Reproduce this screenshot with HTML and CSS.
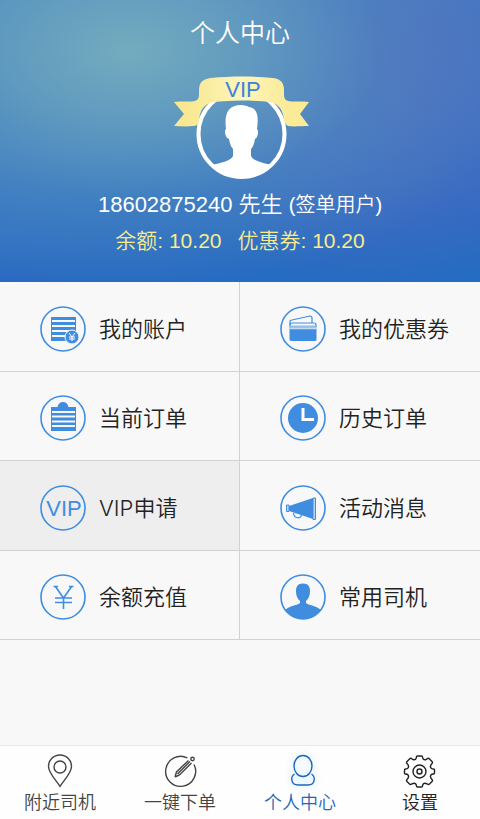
FILE: index.html
```html
<!DOCTYPE html>
<html lang="zh-CN">
<head>
<meta charset="utf-8">
<meta name="viewport" content="width=device-width, initial-scale=1">
<title>个人中心</title>
<link rel="stylesheet" href="styles.css">
</head>
<body>
<header class="hero">
  <h1 class="title">个人中心</h1>
  <svg class="avatar" width="136" height="104" viewBox="0 0 136 104" role="img" aria-label="VIP">
    <defs>
      <linearGradient id="ribbon" x1="0" x2="1" y1="0" y2="0">
        <stop offset="0" stop-color="#fbe78c"/>
        <stop offset=".2" stop-color="#f9eb9a"/>
        <stop offset=".5" stop-color="#fff5ba"/>
        <stop offset=".8" stop-color="#faec9c"/>
        <stop offset="1" stop-color="#fbea92"/>
      </linearGradient>
      <clipPath id="face"><circle cx="67.500" cy="58" r="44"/></clipPath>
    </defs>
    <circle class="ring" cx="67.500" cy="58" r="43"/>
    <path class="person" clip-path="url(#face)" d="M52 53C50 38 54 29 67 29C71 29 73 30 75 31C83 32 85 39 83 53C85 54 84 62 81 63C80 68 79 71 77 73V80C79 85 89 87 97 89V104H38V89C46 87 57 85 59 80V73C57 71 56 68 55 63C51 62 50 54 52 53Z"/>
    <path class="ribbon" d="M0 26C7 25 17 26 21 25C24 24 25 22 25 18V14C25 6 29 3 37 2C57 0 79 0 99 2C107 3 110 7 110 14V18C110 22 111 24 114 25C118 26 128 25 135 26L126 38L135 50C128 50 119 51 114 50C112 49 111 47 110 44C109 34 105 28 96 26C77 24 58 24 39 26C30 28 26 34 25 44C25 48 23 50 18 50C12 51 6 50 0 50L10 38Z"/>
    <text class="ribbon-text" x="69" y="21" text-anchor="middle">VIP</text>
  </svg>
  <p class="user">18602875240 先生 <span class="kind">(签单用户)</span></p>
  <p class="funds"><span>余额: 10.20</span><span>优惠券: 10.20</span></p>
</header>

<nav class="menu" aria-label="个人中心">
  <a class="item" href="#account">
    <svg class="badge" viewBox="0 0 46 46" aria-hidden="true">
      <circle class="line" cx="23" cy="23" r="22"/>
      <path class="fill" d="M11 11H36V35H11Z"/>
      <path class="bar" d="M12 15H35M12 20H35M12 25H35M12 30H26"/>
      <circle class="coin" cx="32" cy="31" r="7"/>
      <path class="mark" d="M29 27L32 31L35 27M32 31V35M29 31H35M29 33H35"/>
    </svg>
    <span>我的账户</span>
  </a>
  <a class="item" href="#coupons">
    <svg class="badge" viewBox="0 0 46 46" aria-hidden="true">
      <circle class="line" cx="23" cy="23" r="22"/>
      <path class="thin" d="M10 19V15Q10 14 12 14L30 10Q32 10 32 12V17"/>
      <path class="thin" d="M10 21V19Q10 17 12 17H34Q36 17 36 19V21Z"/>
      <path class="fill" d="M9.500 23H36.500V34Q36.500 35 35 35H11Q9.500 35 9.500 33Z"/>
      <path class="wallet" d="M9 20H37M9 23H37"/>
    </svg>
    <span>我的优惠券</span>
  </a>
  <a class="item" href="#orders">
    <svg class="badge" viewBox="0 0 46 46" aria-hidden="true">
      <circle class="line" cx="23" cy="23" r="22"/>
      <path class="fill" d="M11 12H17.500C18 9 20 7 23 7S28 9 28.500 12H36V36H11Z"/>
      <path class="bar" d="M12 17H35M12 21.500H35M12 26.500H35M12 31H35"/>
    </svg>
    <span>当前订单</span>
  </a>
  <a class="item" href="#history">
    <svg class="badge" viewBox="0 0 46 46" aria-hidden="true">
      <circle class="line" cx="23" cy="23" r="22"/>
      <circle class="fill" cx="23" cy="23" r="15"/>
      <path class="hands" d="M23 13V24.500H34"/>
    </svg>
    <span>历史订单</span>
  </a>
  <a class="item current" href="#vip">
    <svg class="badge" viewBox="0 0 46 46" aria-hidden="true">
      <circle class="line" cx="23" cy="23" r="22"/>
      <text class="badge-text" x="24" y="31" text-anchor="middle">VIP</text>
    </svg>
    <span>VIP申请</span>
  </a>
  <a class="item" href="#news">
    <svg class="badge" viewBox="0 0 46 46" aria-hidden="true">
      <circle class="line" cx="23" cy="23" r="22"/>
      <path class="fill" d="M9 21L33 13V34L9 26Z"/>
      <path class="horn" d="M33 13H35.500V34.500H33ZM6.500 20H9V26.500H6.500Z"/>
      <path class="thin" d="M13.500 28C14 34 21 34 21.500 30"/>
    </svg>
    <span>活动消息</span>
  </a>
  <a class="item" href="#topup">
    <svg class="badge" viewBox="0 0 46 46" aria-hidden="true">
      <circle class="line" cx="23" cy="23" r="22"/>
      <path class="yen" d="M15 12L23.500 24L32 12M23.500 24V35M15 24H32M15 28.500H32M13.500 12.500H18M29 12.500H33.500"/>
    </svg>
    <span>余额充值</span>
  </a>
  <a class="item" href="#drivers">
    <svg class="badge" viewBox="0 0 46 46" aria-hidden="true">
      <defs><clipPath id="driver"><circle cx="23" cy="23" r="22"/></clipPath></defs>
      <path class="fill" clip-path="url(#driver)" d="M23 9.500C28.500 9.500 30 13 30 17C30 22 28 25.500 26 27V29C28 31 37 32 41 36V46H5V36C9 32 18 31 20 29V27C18 25.500 16 22 16 17C16 13 17.500 9.500 23 9.500Z"/>
      <circle class="line" cx="23" cy="23" r="22"/>
    </svg>
    <span>常用司机</span>
  </a>
</nav>

<nav class="tabs" aria-label="主导航">
  <a class="tab" href="#nearby">
    <svg class="tab-icon" viewBox="0 0 34 34" aria-hidden="true">
      <path d="M17 32.500C13 26 5.500 19 5.500 12.500A11.500 11.500 0 0 1 28.500 12.500C28.500 19 21 26 17 32.500Z"/>
      <circle cx="17" cy="13" r="6"/>
    </svg>
    <span>附近司机</span>
  </a>
  <a class="tab" href="#order">
    <svg class="tab-icon" viewBox="0 0 34 34" aria-hidden="true">
      <path d="M24.500 4A15 15 0 1 0 31 10.500"/>
      <path d="M12 23L13.500 18L25.500 6.500M12 23L16.500 21L28.500 9M14.500 20L27 7.500"/>
      <circle cx="29.500" cy="5" r="1.700"/>
    </svg>
    <span>一键下单</span>
  </a>
  <a class="tab active" href="#me" aria-current="page">
    <svg class="tab-icon" viewBox="0 0 34 34" aria-hidden="true">
      <ellipse cx="20" cy="12" rx="9" ry="10.500"/>
      <path d="M11.500 20C7 23 8 31 15 31H25C32 31 33 23 28.500 20"/>
    </svg>
    <span>个人中心</span>
  </a>
  <a class="tab dark" href="#settings">
    <svg class="tab-icon" viewBox="0 0 34 34" aria-hidden="true">
      <path d="M13.500 3Q13.500 2 14.500 2H18.500Q19.500 2 19.500 3Q20 6.500 23 5.500L24.500 4.500Q25.500 4 26.500 5L29 7.500Q30 8.500 29 9.500Q26.500 12 28 14Q28.500 15 30.500 15Q31.500 15 31.500 16V19Q31.500 20 30.500 20Q28.500 20 28 21Q26.500 23 29 25.500Q30 26.500 29 27.500L26.500 30Q25.500 31 24.500 30L23 29.500Q20 28.500 19.500 32Q19.500 33 18.500 33H14.500Q13.500 33 13.500 32Q13 28.500 10 29.500L8.500 30Q7.500 31 6.500 30L4 27.500Q3 26.500 4 25.500Q6.500 23 5 21Q4.500 20 2.500 20Q1.500 20 1.500 19V16Q1.500 15 2.500 15Q4.500 15 5 14Q6.500 12 4 9.500Q3 8.500 4 7.500L6.500 5Q7.500 4 8.500 4.500L10 5.500Q13 6.500 13.500 3Z"/>
      <circle cx="16.500" cy="17.500" r="6.500"/>
      <circle cx="16.500" cy="17.500" r="2.500"/>
    </svg>
    <span>设置</span>
  </a>
</nav>
</body>
</html>
```
FILE: styles.css
```css
* {
  box-sizing: border-box;
}

body {
  margin: 0;
  min-height: 100vh;
  display: flex;
  flex-direction: column;
  background: #f8f8f8;
  color: #222;
  font-family: "Liberation Sans", "Noto Sans CJK SC", sans-serif;
  font-weight: 350;
}

a {
  color: inherit;
  text-decoration: none;
}

.hero {
  display: flex;
  flex-direction: column;
  align-items: center;
  padding: 15px 0 23px;
  color: #fff;
  background:
    radial-gradient(ellipse 85% 85% at 27% 18%, #74abbe 0%, rgba(104, 162, 191, 0.8) 30%, rgba(84, 148, 191, 0.4) 62%, rgba(70, 130, 191, 0) 100%),
    radial-gradient(ellipse 50% 90% at 82% 20%, #4e6bc0 0%, rgba(76, 107, 192, 0) 100%),
    linear-gradient(172deg, #4080c0 0%, #3c78c2 45%, #2a6bc2 80%, #206cc2 100%);
}

.title {
  margin: 0 0 25px;
  font-size: 25px;
  font-weight: 350;
  line-height: 36px;
}

.avatar {
  display: block;
  margin-left: 3px;
}

.ring {
  fill: none;
  stroke: #fff;
  stroke-width: 4;
}

.person {
  fill: #fff;
}

.ribbon {
  fill: url(#ribbon);
}

.ribbon-text {
  fill: #3b83dc;
  font-size: 22px;
}

.user,
.funds {
  margin: 0;
  line-height: 36px;
}

.user {
  margin-top: 7px;
  font-size: 22px;
}

.kind {
  font-size: 20px;
}

.funds {
  display: flex;
  gap: 16px;
  color: #f8ec8c;
  font-size: 21px;
}

.menu {
  display: grid;
  grid-template-columns: 1fr 1fr;
  grid-template-rows: repeat(4, 1fr);
  min-height: 358px;
}

.item {
  display: flex;
  align-items: center;
  gap: 13px;
  padding: 5px 0 0 40px;
  border-bottom: 1px solid #d2d2d2;
  font-family: Inter, "Noto Sans CJK SC", sans-serif;
  font-size: 22px;
  line-height: 32px;
}

.item:nth-child(odd) {
  border-right: 1px solid #d2d2d2;
}

.current {
  background: #eee;
}

.badge {
  flex: none;
  width: 46px;
  height: 46px;
  fill: none;
  stroke: none;
}

.line,
.thin,
.yen {
  stroke: #3e8de2;
  stroke-width: 1.6;
}

.thin {
  stroke-width: 1.2;
}

.fill {
  fill: #408de0;
}

.bar {
  stroke: #f8f8f8;
  stroke-width: 2;
}

.coin {
  fill: #408de0;
  stroke: #f8f8f8;
}

.mark {
  stroke: #fff;
}

.wallet {
  stroke: #8dbcee;
}

.hands {
  stroke: #fff;
  stroke-width: 3;
}

.horn {
  fill: #b9d6f5;
  stroke: #408de0;
}

.badge-text {
  fill: #3e8de2;
  font-family: "Liberation Sans", sans-serif;
  font-size: 22px;
}

.tabs {
  display: grid;
  grid-template-columns: repeat(4, 1fr);
  margin-top: auto;
  padding: 8px 0 1px;
  border-top: 1px solid #e8e8e8;
  background: #fefefe;
}

.tab {
  display: flex;
  flex-direction: column;
  align-items: center;
  color: #444;
  font-size: 18px;
  line-height: 30px;
}

.tab-icon {
  width: 34px;
  height: 34px;
  fill: none;
  stroke: currentColor;
  stroke-width: 1.4;
}

.active {
  color: #1e66bc;
}

.active .tab-icon {
  filter: drop-shadow(0 0 4px #a9d8ff);
}

.dark {
  color: #222;
}
```
